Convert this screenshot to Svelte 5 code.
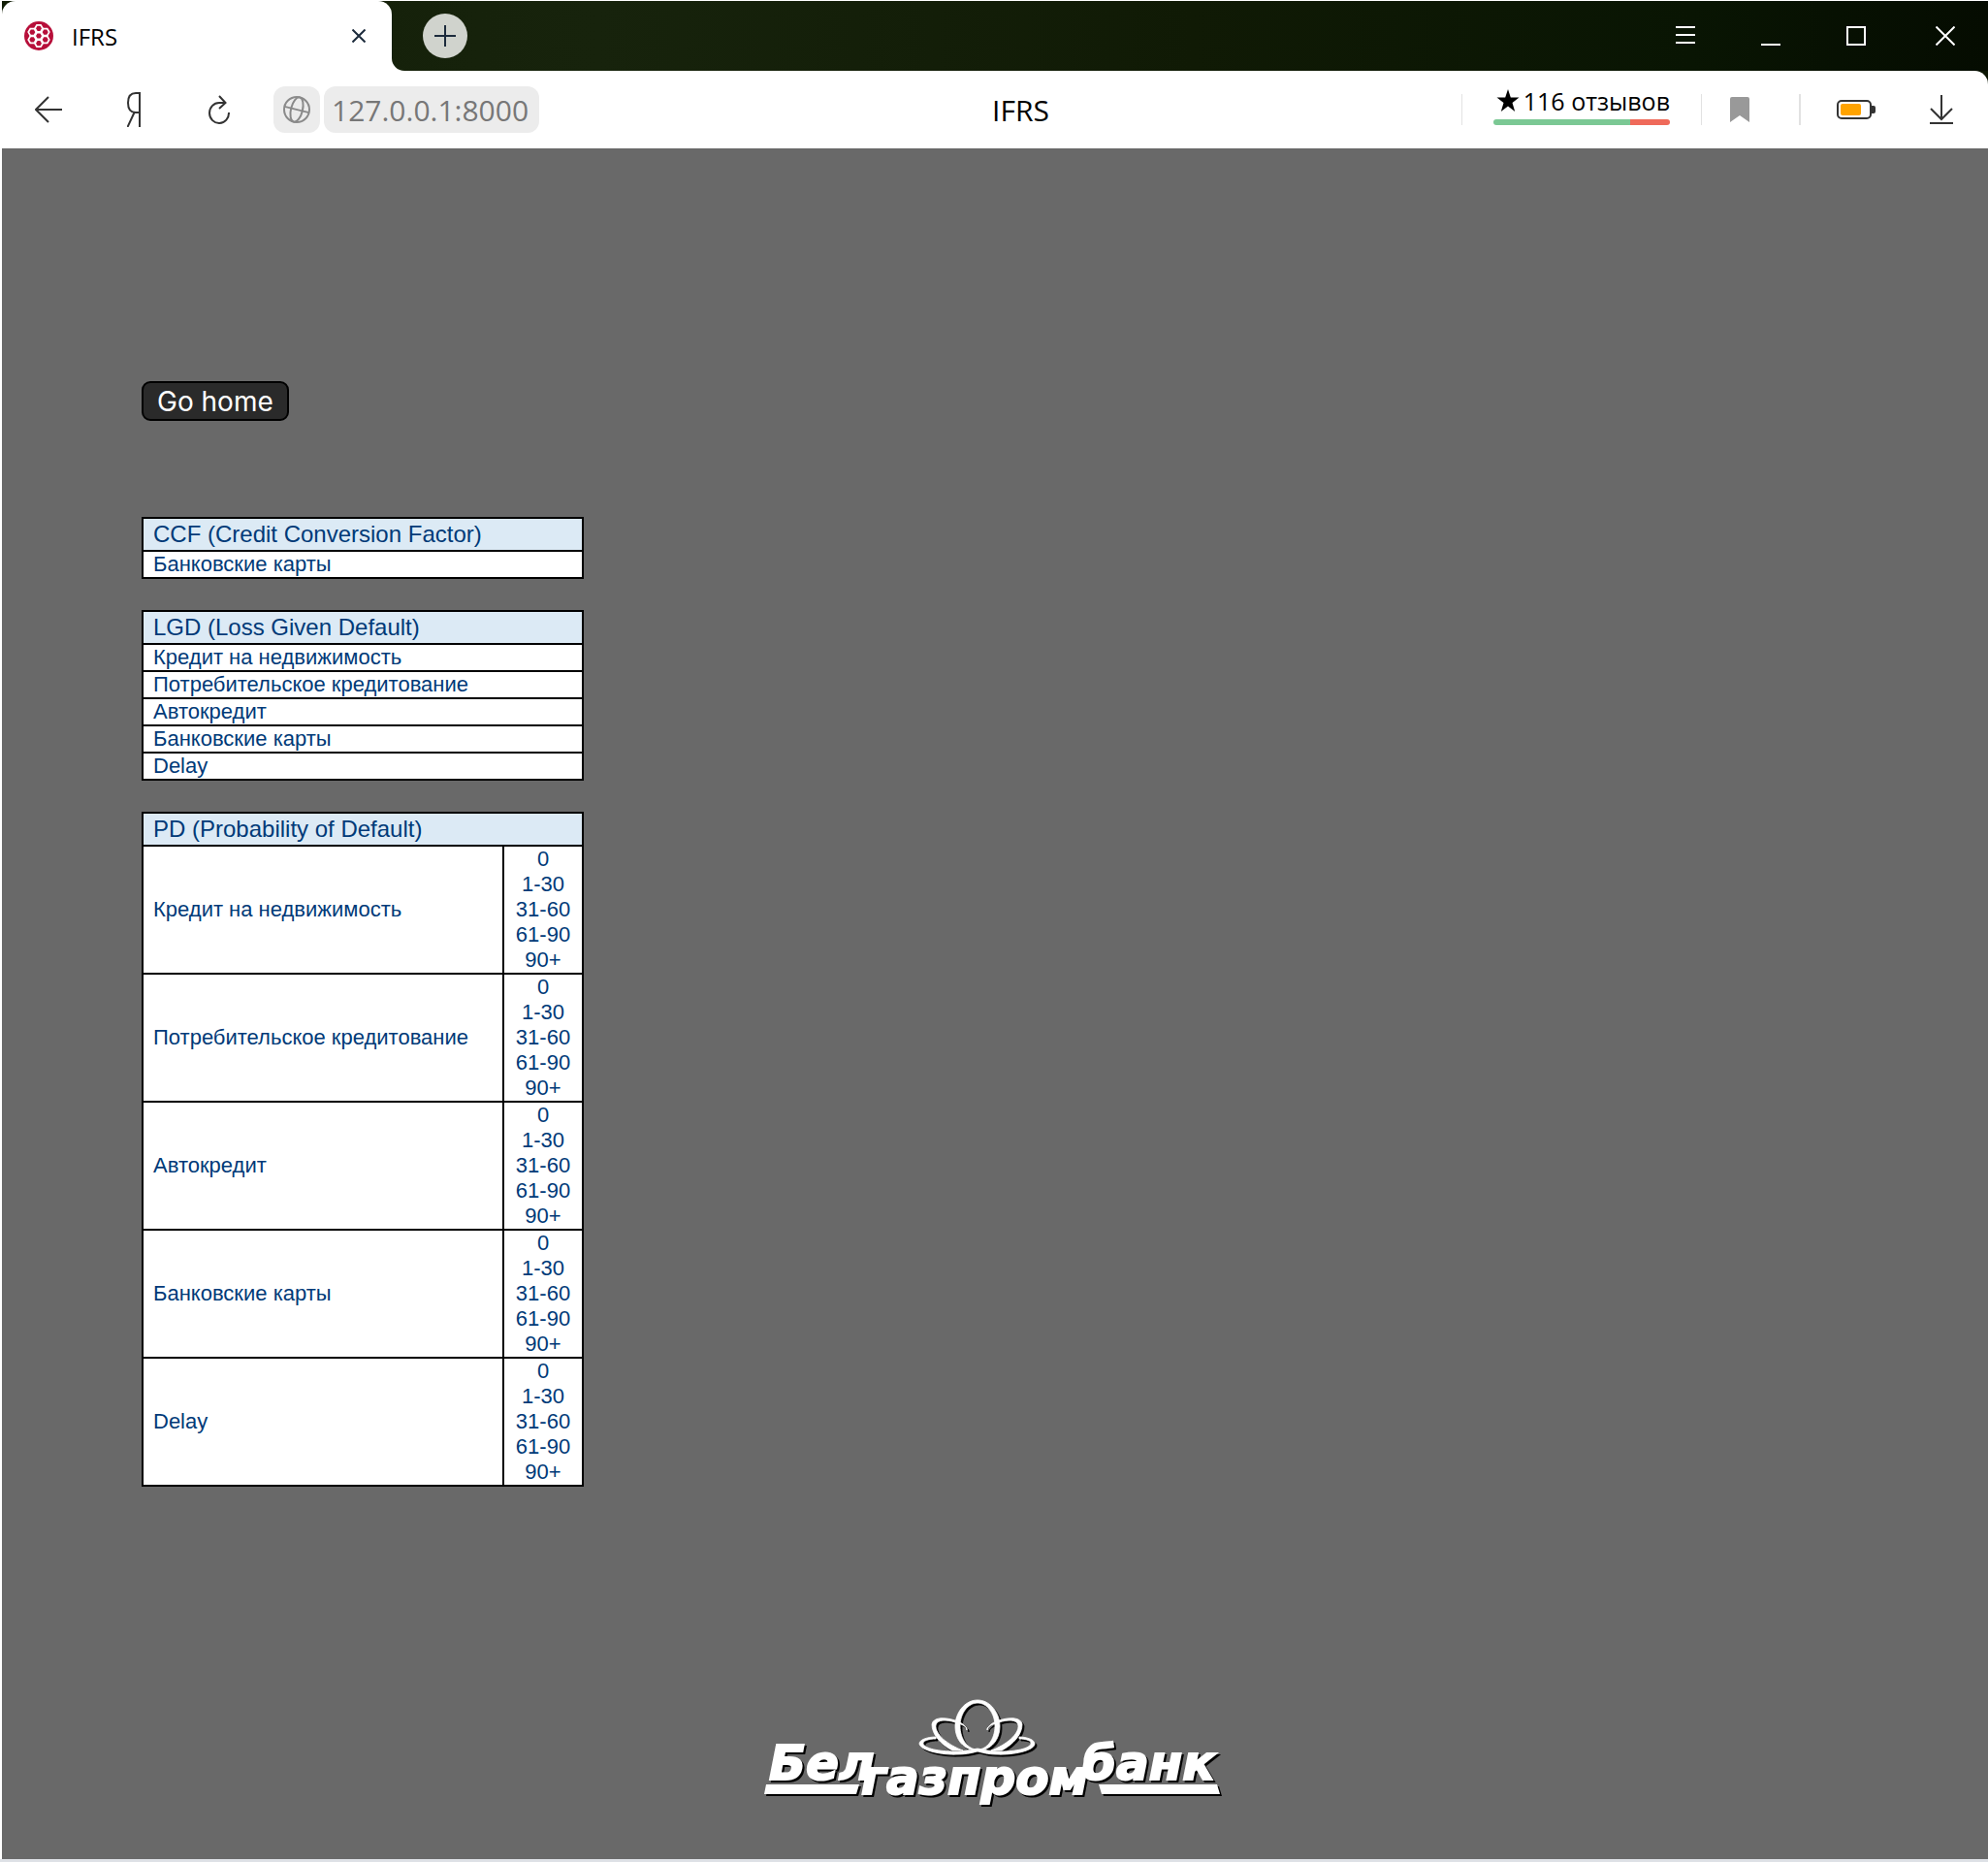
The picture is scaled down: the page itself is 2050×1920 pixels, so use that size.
<script>
  const products = [
    'Кредит на недвижимость',
    'Потребительское кредитование',
    'Автокредит',
    'Банковские карты',
    'Delay'
  ];
  const buckets = ['0', '1-30', '31-60', '61-90', '90+'];
  const address = '127.0.0.1:8000';
  const hexes = [
    [15, 15], [15, 7.3], [15, 22.7], [8.3, 11.1], [21.7, 11.1], [8.3, 18.9], [21.7, 18.9]
  ];
</script>

<div class="window">
  <header class="tabstrip">
    <div class="tab">
      <svg class="favicon" viewBox="0 0 30 30" width="30" height="30" aria-hidden="true">
        <circle cx="15" cy="15" r="15" fill="#b70f3a" />
        {#each hexes as [x, y]}
          <path d="M-2 -3.500H2L4 0 2 3.500H-2L-4 0Z" transform="translate({x} {y})" fill="#b70f3a" stroke="#fff" stroke-width="1.8" />
        {/each}
      </svg>
      <span class="tab-title">IFRS</span>
      <button class="icon tab-close" aria-label="Close tab">
        <svg viewBox="0 0 14 14" width="14" height="14"><path d="M0.5 0.5 13.5 13.5M13.5 0.5 0.5 13.5" stroke="#1c2b3c" stroke-width="2" /></svg>
      </button>
    </div>
    <div class="strip">
      <svg class="flare" viewBox="0 0 13 13" width="13" height="13" aria-hidden="true"><path d="M0 0A13 13 0 0 0 13 13H0Z" fill="#fff" /></svg>
      <button class="newtab" aria-label="New tab">
        <svg viewBox="0 0 22 22" width="22" height="22"><path d="M11 0V22M0 11H22" stroke="#1c2b3c" stroke-width="2" /></svg>
      </button>
      <nav class="winctl" aria-label="Window">
        <button class="icon" aria-label="Menu"><svg viewBox="0 0 20 20" width="20" height="20"><path d="M0 1H20M0 9H20M0 17H20" stroke="#fff" stroke-width="2" /></svg></button>
        <button class="icon" aria-label="Minimize"><svg viewBox="0 0 20 20" width="20" height="20"><path d="M0 19H20" stroke="#fff" stroke-width="2" /></svg></button>
        <button class="icon" aria-label="Maximize"><svg viewBox="0 0 20 20" width="20" height="20"><path d="M1 1H19V19H1Z" fill="none" stroke="#fff" stroke-width="2" /></svg></button>
        <button class="icon" aria-label="Close"><svg viewBox="0 0 20 20" width="20" height="20"><path d="M0.5 0.5 19.5 19.5M19.5 0.5 0.5 19.5" stroke="#fff" stroke-width="2" /></svg></button>
      </nav>
    </div>
  </header>

  <div class="toolbar-back">
    <div class="toolbar">
      <div class="nav">
        <button class="icon" aria-label="Back"><svg viewBox="0 0 28 28" width="28" height="28"><path d="M28 14H1M14 1 1 14 14 27" fill="none" stroke="#333" stroke-width="2" /></svg></button>
        <button class="icon" aria-label="Yandex"><svg viewBox="0 0 16 36" width="16" height="36"><path d="M13 36V1H9C3.500 1 1 5 1 11S3.500 21 9 21H13M7.500 21 0.500 36" fill="none" stroke="#333" stroke-width="2" /></svg></button>
        <button class="icon" aria-label="Reload"><svg viewBox="0 0 24 30" width="24" height="30"><path d="M18 8H12A10 10.500 0 1 0 22 18M12 1 18.500 8 12 14" fill="none" stroke="#333" stroke-width="2" /></svg></button>
      </div>
      <button class="globe" aria-label="Site information">
        <svg viewBox="0 0 30 30" width="30" height="30" fill="none" stroke="#8a8a8a" stroke-width="2"><circle cx="15" cy="15" r="13" /><g transform="rotate(14 15 15)"><ellipse cx="15" cy="15" rx="6" ry="13" /><path d="M2 15H28" /></g></svg>
      </button>
      <input class="address" aria-label="Address" value={address} />
      <h1 class="title">IFRS</h1>
      <div class="reviews">
        <a href="#reviews" class="rating">
          <span class="line">
            <svg viewBox="0 0 24 24" width="24" height="24" aria-hidden="true"><path d="M12 0 14.800 8.600H23.500L16.500 14 19.200 23 12 17.500 4.800 23 7.500 14 0.500 8.600H9.200Z" fill="#000" /></svg>
            <span>116 отзывов</span>
          </span>
          <span class="bar"><span class="good"></span><span class="bad"></span></span>
        </a>
      </div>
      <div class="cell bookmark">
        <button class="icon" aria-label="Bookmark"><svg viewBox="0 0 20 26" width="20" height="26"><path d="M0 2Q0 0 2 0H18Q20 0 20 2V26L10 19 0 26Z" fill="#999" /></svg></button>
      </div>
      <div class="cell tools">
        <button class="icon" aria-label="Battery"><svg viewBox="0 0 40 20" width="40" height="20"><rect x="1" y="1" width="34" height="18" rx="4" fill="#fff" stroke="#333" stroke-width="2" /><rect x="4" y="4" width="21" height="12" rx="2" fill="#ffa300" /><path d="M36 6H38Q40 6 40 8V12Q40 14 38 14H36Z" fill="#333" /></svg></button>
        <button class="icon" aria-label="Downloads"><svg viewBox="0 0 24 30" width="24" height="30"><path d="M12 0V25M1 14 12 25 23 14M0 29H24" fill="none" stroke="#333" stroke-width="2" /></svg></button>
      </div>
    </div>
  </div>

  <main>
    <button class="home">Go home</button>

    <div class="tables">
      <table>
        <thead><tr><th>CCF (Credit Conversion Factor)</th></tr></thead>
        <tbody><tr><td>Банковские карты</td></tr></tbody>
      </table>

      <table>
        <thead><tr><th>LGD (Loss Given Default)</th></tr></thead>
        <tbody>
          {#each products as name}
            <tr><td>{name}</td></tr>
          {/each}
        </tbody>
      </table>

      <table>
        <thead><tr><th colspan="2">PD (Probability of Default)</th></tr></thead>
        <tbody>
          {#each products as name}
            <tr>
              <td>{name}</td>
              <td class="range">{#each buckets as b}<div>{b}</div>{/each}</td>
            </tr>
          {/each}
        </tbody>
      </table>
    </div>

    <footer>
      <svg class="logo" viewBox="14 16 480 122" width="480" height="122" role="img" aria-label="Белгазпромбанк">
        <g fill="#fff" fill-rule="evenodd" stroke="#fff" stroke-width="0.8">
          <path d="M237 22C250 22 260 35 260 49S251 74 237 74 214 63 214 49 224 22 237 22ZM237 25C227 25 219 36 219 49S227 73 237 73 255 62 255 49 247 25 237 25Z" />
          <path d="M226 51C222 47 217 46 214 45C205 42 195 42 194 48C193 57 206 68 222 74L211 74C198 67 190 57 190 47C191 40 202 39 214 43C220 45 225 48 226 53Z" />
          <path d="M247 51C251 47 256 46 259 45C268 42 278 42 279 48C280 57 267 68 251 74L262 74C275 67 283 57 283 47C282 40 271 39 259 43C253 45 248 48 247 53Z" />
          <path d="M194 60C185 60 177 63 177 67C178 74 200 79 217 78C226 78 233 76 237 75C241 76 248 78 256 78C274 79 296 74 296 67C296 63 288 60 280 60L280 62C287 62 293 64 292 67C291 72 276 75 261 75C250 75 243 73 237 72C231 73 224 75 213 75C198 75 182 72 181 67C180 64 187 62 194 62Z" />
        </g>
        <path d="M19 109H115L112 119H17ZM362 109H484L487 119H365Z" fill="#fff" />
        <g class="word">
          <text x="22" y="104">Бел</text>
          <text x="117" y="119">газпром</text>
          <text x="345" y="104">банк</text>
        </g>
      </svg>
    </footer>
  </main>
</div>

<style>
  :global(body) {
    margin: 0;
    background: #fff;
  }
  .window {
    box-sizing: border-box;
    min-height: 100vh;
    display: flex;
    flex-direction: column;
    padding: 1px 0 0 2px;
    border-bottom: 3px solid #dee1e6;
    font-family: 'Open Sans', 'Noto Sans', sans-serif;
  }
  button {
    font: inherit;
    padding: 0;
    border: 0;
    background: none;
    cursor: pointer;
  }
  svg {
    display: block;
  }
  .icon {
    display: flex;
    align-items: center;
    justify-content: center;
  }
  .tabstrip {
    display: flex;
    height: 72px;
    background: linear-gradient(90deg, #121e07 0%, #17230c 30%, #101a05 60%, #091503 85%, #050c01 100%);
  }
  .tab {
    box-sizing: border-box;
    display: flex;
    align-items: center;
    width: 402px;
    padding: 0 27px 0 23px;
    background: #fff;
    border-radius: 14px 14px 0 0;
  }
  .tab-title {
    margin-left: 19px;
    font-size: 24px;
    color: #000;
  }
  .tab-close {
    margin-left: auto;
  }
  .strip {
    flex: 1;
    display: flex;
    align-items: center;
  }
  .flare {
    align-self: flex-end;
  }
  .newtab {
    display: flex;
    align-items: center;
    justify-content: center;
    width: 46px;
    height: 46px;
    margin-left: 19px;
    border-radius: 50%;
    background: #d0d3cd;
  }
  .winctl {
    display: flex;
    gap: 68px;
    margin-left: auto;
    padding-right: 34px;
  }
  .winctl .icon:last-child {
    margin-left: 4px;
  }
  .toolbar-back {
    background: #0c1603;
  }
  .toolbar {
    display: flex;
    align-items: center;
    height: 80px;
    background: #fff;
    border-radius: 0 14px 0 0;
  }
  .nav {
    display: flex;
    align-items: center;
    justify-content: space-between;
    width: 202px;
    margin: 0 44px 0 34px;
  }
  .globe {
    display: flex;
    align-items: center;
    justify-content: center;
    width: 48px;
    height: 48px;
    margin-right: 4px;
    border-radius: 12px;
    background: #ececec;
  }
  .address {
    box-sizing: border-box;
    width: 222px;
    height: 48px;
    padding: 0 8px;
    border: 0;
    border-radius: 12px;
    background: #ececec;
    color: #777;
    font: 30px 'Open Sans', 'Noto Sans', sans-serif;
  }
  .title {
    flex: 1;
    margin: 0;
    padding-left: 42px;
    text-align: center;
    font-size: 30px;
    font-weight: 400;
    color: #000;
  }
  .reviews {
    display: flex;
    align-items: center;
    height: 32px;
    padding: 0 32px;
    border-left: 1px solid #e2e2e2;
  }
  .rating {
    display: flex;
    flex-direction: column;
    gap: 4px;
    width: 182px;
    padding-bottom: 8px;
    color: #000;
    text-decoration: none;
  }
  .line {
    display: flex;
    align-items: center;
    justify-content: flex-end;
    gap: 4px;
    font-size: 25px;
    line-height: 30px;
    white-space: nowrap;
  }
  .bar {
    display: flex;
    height: 6px;
    border-radius: 3px;
    overflow: hidden;
  }
  .good {
    flex: 141;
    background: #7bc894;
  }
  .bad {
    flex: 41;
    background: #ef6a5a;
  }
  .cell {
    box-sizing: border-box;
    display: flex;
    align-items: center;
    height: 32px;
    border-left: 1px solid #e2e2e2;
  }
  .bookmark {
    width: 101px;
    padding-left: 29px;
  }
  .tools {
    width: 195px;
    padding: 0 36px 0 37px;
    border-left-width: 2px;
    justify-content: space-between;
  }
  main {
    flex: 1;
    display: flex;
    flex-direction: column;
    align-items: flex-start;
    padding: 240px 0 48px 144px;
    background: #696969;
  }
  .home {
    height: 41px;
    padding: 0 14px;
    border: 2px solid #000;
    border-radius: 9px;
    background: #2a2a2a;
    color: #fff;
    font-family: Inter, 'Open Sans', sans-serif;
    font-size: 28px;
    line-height: 36px;
  }
  .tables {
    display: flex;
    flex-direction: column;
    gap: 32px;
    width: 456px;
    margin-top: 99px;
  }
  table {
    width: 100%;
    border-collapse: collapse;
    background: #fff;
    color: #003a78;
    font: 22px/26px 'Liberation Sans', Arial, sans-serif;
  }
  th,
  td {
    padding: 0 0 0 10px;
    border: 2px solid #000;
    text-align: left;
    font-weight: 400;
  }
  th {
    background: #dceaf5;
    font-size: 24px;
    line-height: 32px;
  }
  .range {
    width: 80px;
    padding: 0;
    text-align: center;
  }
  footer {
    align-self: stretch;
    display: flex;
    justify-content: center;
    margin-top: auto;
    padding-right: 147px;
  }
  .logo {
    filter: drop-shadow(2px 2px 0 #000);
    overflow: visible;
  }
  .word {
    fill: #fff;
    stroke: #fff;
    stroke-width: 2px;
    font-family: 'DejaVu Sans', sans-serif;
    font-size: 50px;
    font-weight: 700;
    font-style: italic;
  }
</style>
